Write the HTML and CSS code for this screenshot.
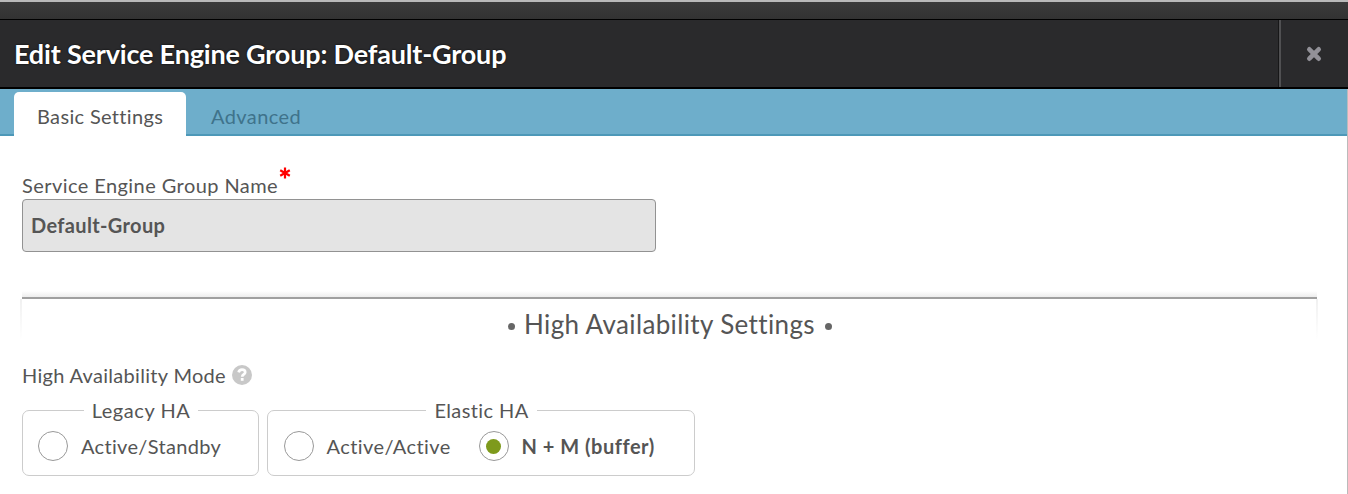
FILE: index.html
```html
<!DOCTYPE html>
<html lang="en">
<head>
<meta charset="utf-8">
<title>Edit Service Engine Group</title>
<link rel="stylesheet" href="styles.css">
</head>
<body>
<div class="backdrop"></div>
<main class="dialog">
  <header class="header">
    <h1 class="title"><span>Edit Service Engine Group: Default-Group</span></h1>
    <button class="close" aria-label="Close"><svg width="16" height="16" viewBox="0 0 16 16"><path d="M3.3 3.3L12.7 12.7M12.7 3.3L3.3 12.7" stroke="#929198" stroke-width="4.6" stroke-linecap="round"/></svg></button>
  </header>
  <nav class="tabs">
    <a class="tab active"><span class="t-basic">Basic Settings</span></a>
    <a class="tab"><span class="t-adv">Advanced</span></a>
  </nav>
  <section class="content">
    <label class="label name-label"><span class="t-name">Service Engine Group Name</span><svg class="required" width="12" height="12" viewBox="0 0 12 12"><path d="M6 .5V11.5M1.2 3.2L10.8 8.8M10.8 3.2L1.2 8.8" stroke="#f00" stroke-width="2.2"/></svg></label>
    <div class="input"><span class="t-input">Default-Group</span></div>
    <div class="section-head"><i class="dot"></i><h2 class="t-head">High Availability Settings</h2><i class="dot"></i></div>
    <div class="label mode-label"><span class="t-mode">High Availability Mode</span><svg class="help" width="20" height="20" viewBox="0 0 20 20"><circle cx="10" cy="10" r="10" fill="#c8c8c8"/><path d="M6.6 7.4C7.1 5.4 8.4 4.7 10 4.7C12 4.7 13.2 5.8 13.2 7.3C13.2 9.5 10.2 9.3 10.2 11.7" fill="none" stroke="#fff" stroke-width="2.7"/><path d="M8.8 13H11.6V15.8H8.8Z" fill="#fff"/></svg></div>
    <div class="groups">
      <fieldset class="group legacy">
        <legend><span class="t-legacy">Legacy HA</span></legend>
        <label class="option"><i class="radio"></i><span class="t-standby">Active/Standby</span></label>
      </fieldset>
      <fieldset class="group elastic">
        <legend><span class="t-elastic">Elastic HA</span></legend>
        <label class="option first"><i class="radio"></i><span class="t-active">Active/Active</span></label>
        <label class="option"><i class="radio checked"></i><span class="t-buffer">N + M (buffer)</span></label>
      </fieldset>
    </div>
  </section>
</main>
</body>
</html>
```
FILE: styles.css
```css
* { box-sizing: border-box; }
body { margin: 0; height: 494px; overflow: hidden; background: #fff; color: #555; font: 20px/24px Lato, "Liberation Sans", sans-serif; font-variant-ligatures: none; }
span, h2 { white-space: nowrap; }
.backdrop { height: 19px; border-top: 2px solid #b9b9b9; background: linear-gradient(#3b3b3b, #323232); }
.dialog { height: 475px; border-right: 1px solid #bbb; }
.header { display: flex; height: 70px; background: #2a2a2c; border-top: 1px solid #000; border-bottom: 2px solid #000; margin-right: -1px; }
.title { flex: 1; margin: 0; padding: 18px 0 0 14px; font-size: 27px; line-height: 32px; font-weight: 700; letter-spacing: -0.18px; color: #fff; text-shadow: 0 0 2px #000; }
.close { width: 69px; padding: 0 2px 0 0; border: 0; border-left: 2px solid #505052; background: none; display: flex; align-items: center; justify-content: center; box-shadow: -1px 0 #171718; }
.tabs { display: flex; height: 47px; padding: 3px 0 0 14px; background: linear-gradient(#4d98b8, #4d98b8) bottom / 100% 2px no-repeat #6eaecb; }
.tab { display: flex; align-items: center; height: 44px; padding: 3px 0 0 25px; color: #3f738b; }
.tab.active { width: 172px; padding-left: 23px; border-radius: 5px 5px 0 0; background: #fff; color: #555; }
.content { padding: 0 30px 0 22px; }
.label { display: flex; align-items: center; }
.name-label { height: 63px; padding-top: 34px; }
.required { margin: -23px 0 0 1px; }
.input { display: flex; align-items: center; width: 634px; height: 53px; padding: 0 8px 2px; border: 1.5px solid #929292; border-radius: 4px; background: #e4e4e4; font-weight: 700; }
.section-head { display: flex; align-items: center; gap: 9.5px; height: 42px; margin-top: 45px; padding: 10px 0 0 485.5px; border-top: 2px solid #a0a0a0; position: relative; }
.section-head::before { content: ""; position: absolute; left: 0; right: 0; top: -8px; height: 6px; background: linear-gradient(#fff, #ededed); }
.section-head::after { content: ""; position: absolute; inset: 0 -1px 0 -2px; border: 2px solid; border-width: 0 2px; border-image: linear-gradient(#f0f0f0, #fff) 1; }
.section-head h2 { margin: 0; font-size: 26px; line-height: 30px; font-weight: 400; }
.dot { width: 7px; height: 7px; border-radius: 50%; background: #666; margin-top: 4px; }
.mode-label { height: 26px; margin-top: 23px; }
.help { margin: -1px 0 0 6.5px; }
.groups { display: flex; gap: 8px; margin-top: 10px; }
.group { position: relative; display: flex; margin: 0; min-width: 0; height: 78px; padding: 9px 14px 0 15px; border: 1.5px solid #ccc; border-radius: 7px; }
.legacy { width: 237px; }
.elastic { width: 428px; }
.group legend { margin: 0 auto; padding: 0 8px; line-height: 24px; height: 24px; }
.option { display: flex; align-items: center; gap: 13px; height: 30px; }
.elastic .option { margin-left: 0.5px; }
.option span { margin-top: -1px; }
.option.first { width: 194.5px; }
.radio { display: flex; width: 30px; height: 30px; border: 1.5px solid #999; border-radius: 50%; align-items: center; justify-content: center; }
.checked::before { content: ""; width: 15px; height: 15px; border-radius: 50%; background: #7e9a1c; }
.t-basic { letter-spacing: 0.34px; }
.t-adv { letter-spacing: 0.4px; }
.t-name { letter-spacing: 0.43px; }
.t-input { letter-spacing: 0.35px; }
.t-head { letter-spacing: 0.37px; }
.t-mode { letter-spacing: 0.31px; }
.t-legacy { letter-spacing: 0.55px; }
.t-elastic { letter-spacing: 0.4px; }
.t-standby { letter-spacing: 0.33px; }
.t-active { letter-spacing: 0.43px; }
.t-buffer { letter-spacing: 0.52px; font-weight: 700; }
```
